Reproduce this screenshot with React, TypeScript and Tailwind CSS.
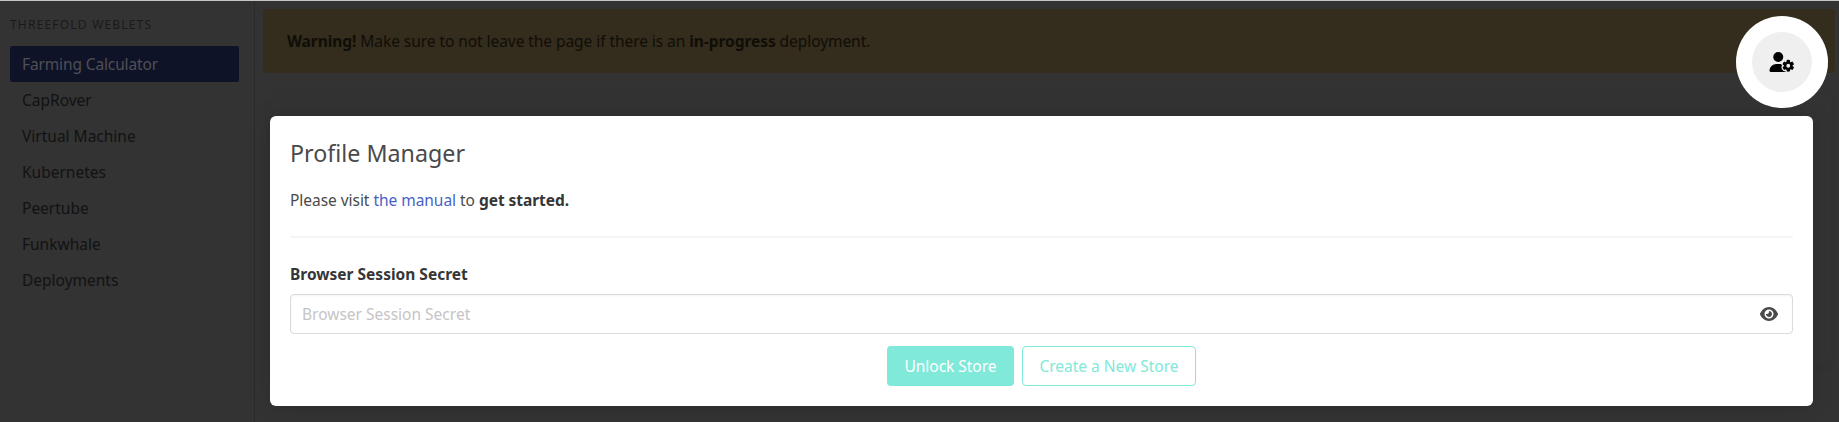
import { FaEye, FaUserGear } from 'react-icons/fa6';

const weblets = [
  { name: 'Farming Calculator', active: true, tracking: 'tracking-[-0.13px]' },
  { name: 'CapRover', tracking: 'tracking-normal' },
  { name: 'Virtual Machine', tracking: 'tracking-normal' },
  { name: 'Kubernetes', tracking: 'tracking-normal' },
  { name: 'Peertube', tracking: 'tracking-normal' },
  { name: 'Funkwhale', tracking: 'tracking-normal' },
  { name: 'Deployments', tracking: 'tracking-normal' },
];

function Sidebar() {
  return (
    <aside className="w-[255px] shrink-0 border-r border-[#2b2b2b] pl-[10px] pr-[15px] pt-[15px]">
      <p className="mb-3 text-xs leading-[18px] tracking-[1.2px] text-[#1a1a1a]">
        THREEFOLD WEBLETS
      </p>
      <ul>
        {weblets.map(({ name, active, tracking }) => (
          <li key={name}>
            <a
              className={`block h-9 rounded-[2px] px-3 py-[6px] leading-6 ${tracking} ${
                active ? 'bg-[#0f1328] text-[#4f4f55]' : 'text-[#121212]'
              }`}
            >
              {name}
            </a>
          </li>
        ))}
      </ul>
    </aside>
  );
}

function ProfileManager() {
  return (
    <section className="absolute left-[270px] top-[116px] flex h-[290px] w-[1543px] flex-col rounded-md bg-white px-5 pt-[19px] text-[#4a4a4a] shadow-[0_0_20px_rgba(0,0,0,0.15)]">
      <h1 className="text-[23.25px] leading-9">Profile Manager</h1>
      <p className="mt-[17px] leading-6 tracking-[-0.04px]">
        Please visit <a className="text-[#485fc7]">the manual</a> to{' '}
        <strong className="font-bold text-[#363636]">get started.</strong>
      </p>
      <hr className="mt-6 h-[2px] border-0 bg-[#f5f5f5]" />
      <label className="mt-6 block font-bold leading-6 text-[#363636]">Browser Session Secret</label>
      <div className="mt-2 flex h-10 shrink-0 items-center justify-between rounded-[4px] border border-[#dbdbdb] pl-[11px] pr-[14px] shadow-[inset_0_1px_2px_rgba(10,10,10,0.05)]">
        <input
          className="min-w-0 flex-1 bg-transparent pt-[2px] outline-none placeholder:text-[#c5c5c5]"
          placeholder="Browser Session Secret"
        />
        <FaEye className="h-4 w-[18px]" />
      </div>
      <div className="mt-3 flex justify-center gap-2">
        <button className="h-10 w-[127px] rounded-[4px] bg-[#80e9d9] pt-[2px] tracking-[-0.03px] text-white">
          Unlock Store
        </button>
        <button className="h-10 w-[174px] rounded-[4px] border border-[#80e9d9] pt-[2px] text-[#80e9d9]">
          Create a New Store
        </button>
      </div>
    </section>
  );
}

export default function App() {
  return (
    <div className="relative flex h-[422px] w-[1839px] overflow-hidden border-t border-[#c3c8c5] bg-[#333333] font-['Noto_Sans',sans-serif] text-[15.5px]">
      <Sidebar />
      <main className="flex-1 pl-2 pr-1 pt-2">
        <div className="h-16 rounded-[4px] bg-[#342c1c] py-5 pl-6 leading-6 tracking-[-0.06px] text-[#100e08]">
          <strong className="font-bold">Warning!</strong> Make sure to not leave the page if there is an{' '}
          <strong className="font-bold">in-progress</strong> deployment.
        </div>
        <div className="ml-2 mr-1 mt-[22px] h-[271px] rounded-md shadow-[0_0_8px_rgba(0,0,0,0.06)]" />
      </main>
      <div className="absolute -top-px left-0">
        <ProfileManager />
      </div>
      <button className="absolute left-[1736px] top-[15px] flex size-[92px] items-center justify-center rounded-full bg-white">
        <span className="flex size-[60px] items-center justify-center rounded-full bg-[#efefef] text-black">
          <FaUserGear className="h-5 w-[26px]" />
        </span>
      </button>
    </div>
  );
}
